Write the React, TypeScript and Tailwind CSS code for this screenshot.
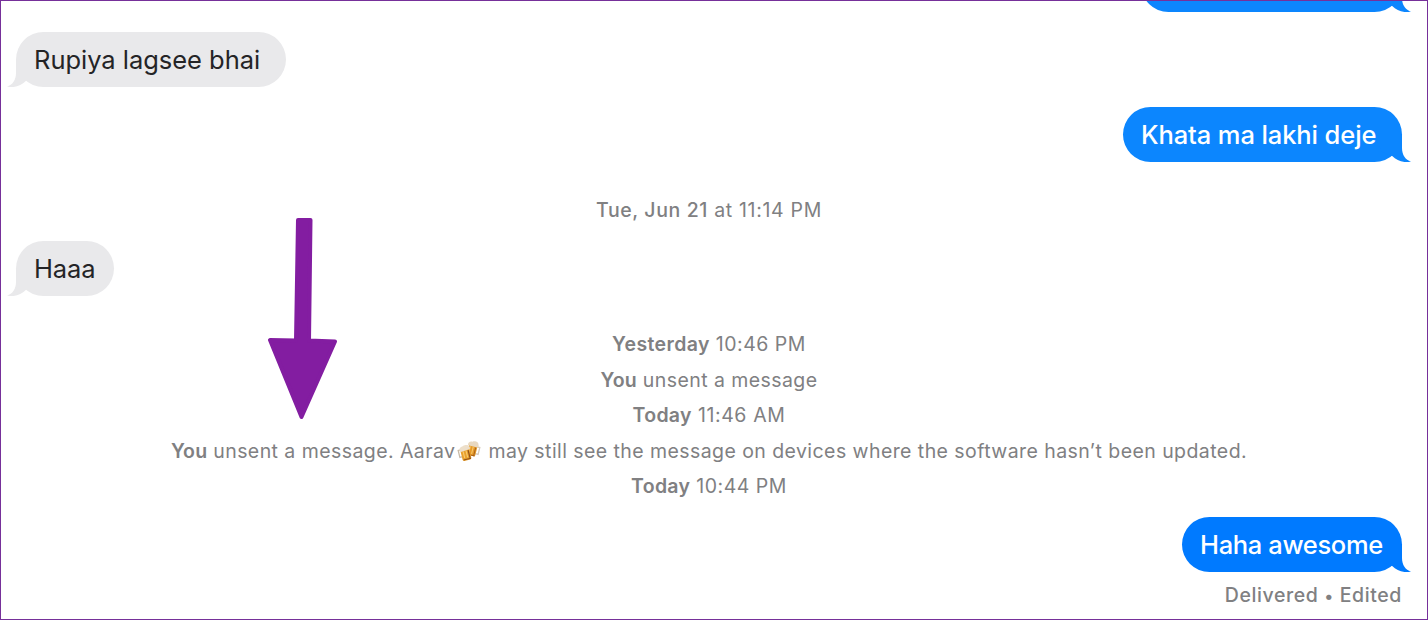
import type { ReactNode } from "react"
import clsx from "clsx"

type BubbleProps = {
    side: "left" | "right"
    className: string
    textClassName?: string
    children?: ReactNode
}

function Bubble({ side, className, textClassName, children }: BubbleProps) {
    return (
        <div
            className={clsx(
                "relative flex h-[55px] shrink-0 items-center rounded-[27.5px] px-[18px] text-[25.5px] leading-none whitespace-nowrap",
                side === "right" ? "self-end font-[450] text-white" : "self-start font-[430] text-[#242426]",
                className
            )}
        >
            {/* Tail */}
            <svg
                viewBox="0 0 37 28"
                className={clsx(
                    "absolute bottom-0 h-7 w-[37px]",
                    side === "right" ? "-right-[9px]" : "-left-[9px] -scale-x-100"
                )}
            >
                <path
                    d="M0 0H28V14C28 21 31.500 26 37 27.500C30 29.500 23 26.500 18.200 22L8 18Z"
                    className={side === "left" ? "fill-[#e9e9eb]" : className.includes("#007aff") ? "fill-[#007aff]" : "fill-[#0c86fe]"}
                />
            </svg>
            <span className={clsx("relative", textClassName)}>{children}</span>
        </div>
    )
}

function Notice({ className, children }: { className?: string; children: ReactNode }) {
    return (
        <p className={clsx("flex shrink-0 items-center justify-center whitespace-pre text-[19.5px] leading-none text-[#808082]", className)}>
            {children}
        </p>
    )
}

function Beers() {
    return (
        <svg viewBox="0 0 24 22" className="mr-[7px] mb-[3px] ml-[2px] h-[22px] w-6 shrink-0">
            <g transform="rotate(14 16 10)">
                <path d="M19 6h3v7h-3" fill="none" stroke="#d5cabb" strokeWidth="1.300" />
                <rect x="11" y="4" width="8.500" height="12" rx="1.500" fill="#e69a27" />
                <path d="M12.500 7v7M15.500 7v7" stroke="#f7c66d" strokeWidth="1.100" />
                <path d="M18 7v8M12 15.500h7" stroke="#a8611b" strokeWidth="1" />
                <path d="M10 6.500c-1-3 1-4.500 3.500-4.500 2-2 6.500-1 6.500 1.500 1 1 .5 3-.5 3z" fill="#e8d8c0" />
            </g>
            <g transform="rotate(-14 8 13)">
                <path d="M5 9H2v7h3" fill="none" stroke="#c8b9a5" strokeWidth="1.300" />
                <rect x="4" y="8" width="9" height="12.500" rx="1.500" fill="#e9a02c" />
                <path d="M6.500 11v7M9.500 11v7" stroke="#f8cb72" strokeWidth="1.100" />
                <path d="M11.700 11v8M5 19.500h7.500" stroke="#8f501c" strokeWidth="1.200" />
                <path d="M3.500 11c-1-3 1-5 3.500-5 2-1.500 6.500-.5 6.500 1.500 1 1 .5 3-.5 3z" fill="#eddfca" />
            </g>
        </svg>
    )
}

function Arrow() {
    return (
        <svg
            viewBox="0 0 70 202"
            className="pointer-events-none absolute top-[216px] left-[266px] h-[202px] w-[70px]"
            fill="#831da1"
            stroke="#831da1"
            strokeWidth="4"
            strokeLinejoin="round"
        >
            <path d="M31 3L43.500 3L42 123.500L68 124.500L34.500 200L3 123L29 123.500Z" />
        </svg>
    )
}

export default function App() {
    return (
        <main className="relative flex h-[620px] w-[1428px] flex-col overflow-hidden border border-[#76309a] bg-white pr-[25px] pl-[15px] font-['Inter','Liberation_Sans',sans-serif]">
            <Bubble side="right" className="-mt-11 w-[261px] bg-[#0c86fe]" />
            <Bubble side="left" className="mt-5 w-[270px] bg-[#e9e9eb]" textClassName="tracking-[-0.03px]">
                Rupiya lagsee bhai
            </Bubble>
            <Bubble side="right" className="mt-5 w-[279px] bg-[#0c86fe]" textClassName="tracking-[-0.1px]">
                Khata ma lakhi deje
            </Bubble>
            <Notice className="mt-[30px] h-9 pt-0.5 tracking-[0.68px]">
                <span className="font-[550] tracking-[0.6px]">Tue, Jun 21</span> at 11:14 PM
            </Notice>
            <Bubble side="left" className="mt-[13px] w-[98px] bg-[#e9e9eb]" textClassName="tracking-[-0.1px]">
                Haaa
            </Bubble>
            <Notice className="mt-[30px] h-9 pt-0.5 tracking-[0.5px]">
                <span className="font-semibold tracking-[0.38px]">Yesterday</span> 10:46 PM
            </Notice>
            <Notice className="h-9 pt-0.5 tracking-[0.42px]">
                <span className="font-semibold tracking-[0.2px]">You</span> unsent a message
            </Notice>
            <Notice className="h-[35px] tracking-[0.6px]">
                <span className="font-semibold tracking-[0.3px]">Today</span> 11:46 AM
            </Notice>
            <Notice className="h-9 pt-0.5 tracking-[0.43px]">
                <span className="font-semibold tracking-[0.2px]">You</span> unsent a message. Aarav
                <Beers />
                may still see the message on devices where the software hasn’t been updated.
            </Notice>
            <Notice className="h-[35px] tracking-[0.5px]">
                <span className="font-semibold tracking-[0.3px]">Today</span> 10:44 PM
            </Notice>
            <Bubble side="right" className="mt-[13px] w-[220px] bg-[#007aff]" textClassName="tracking-[-0.35px]">
                Haha awesome
            </Bubble>
            <p className="mt-[13px] self-end text-[19.5px] leading-5 font-medium tracking-[0.6px] whitespace-nowrap text-[#808082]">
                Delivered <span className="text-[17px]">•</span> Edited
            </p>
            <Arrow />
        </main>
    )
}
